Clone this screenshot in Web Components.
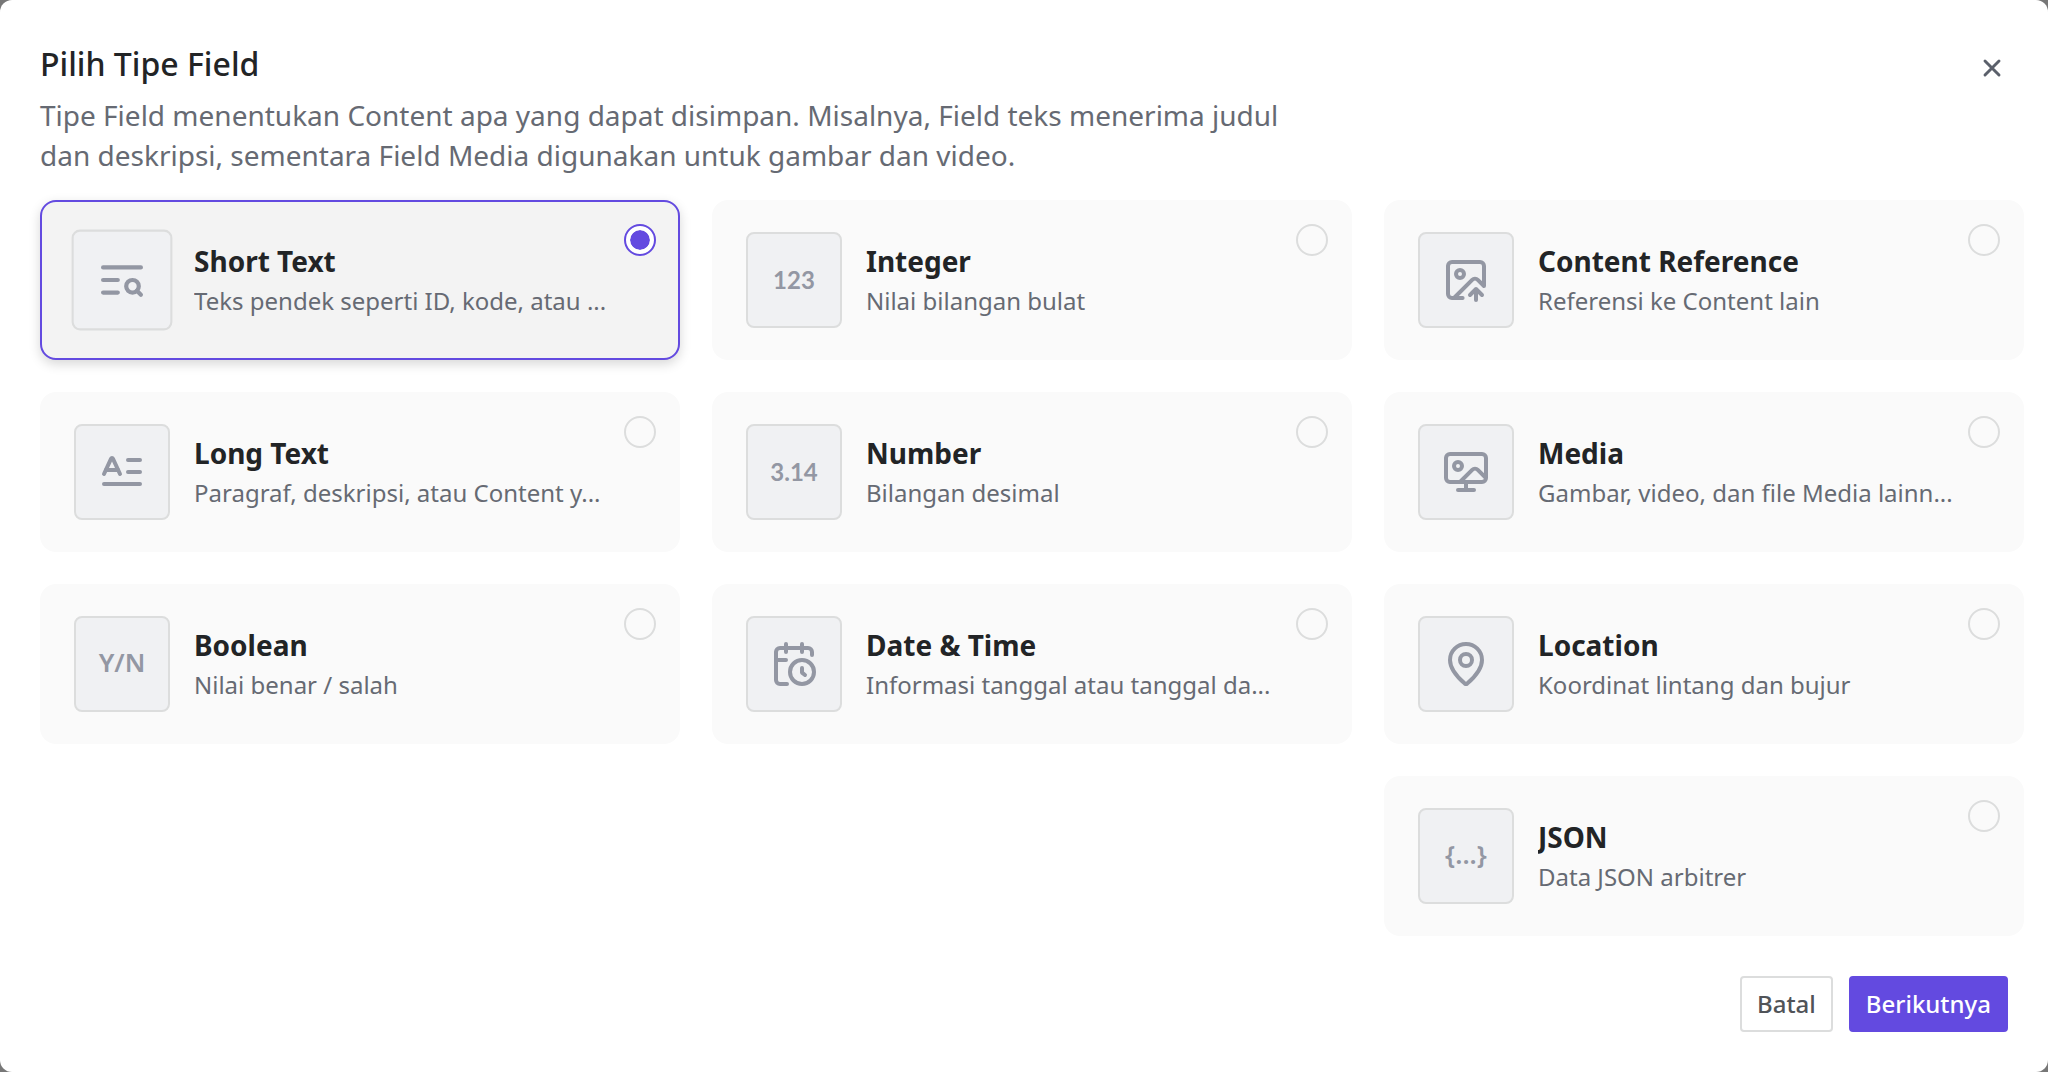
<!DOCTYPE html>
<html lang="id">
<head>
<meta charset="utf-8">
<meta name="viewport" content="width=device-width, initial-scale=1">
<title>Pilih Tipe Field</title>
<style>
    body {
        margin: 0;
        min-height: 100vh;
        background-color: #777;
        color: #222426;
        font-family: "Noto Sans", "Open Sans", sans-serif;
        --accent: #634ae0;
        --muted: #666a73;
        --line: #dcdddd;
        --icon: #9397a3;
    }
</style>
</head>
<body>
<field-dialog>
    <span slot="title">Pilih Tipe Field</span>
    <span slot="description">Tipe Field menentukan Content apa yang dapat disimpan. Misalnya, Field teks menerima judul dan deskripsi, sementara Field Media digunakan untuk gambar dan video.</span>

    <field-group>
        <field-column>
            <field-card icon="short-text" value="short-text" checked>
                <span slot="name">Short Text</span>
                <span slot="hint">Teks pendek seperti ID, kode, atau ...</span>
            </field-card>
            <field-card icon="long-text" value="long-text">
                <span slot="name">Long Text</span>
                <span slot="hint">Paragraf, deskripsi, atau Content y...</span>
            </field-card>
            <field-card symbol-size="large" value="boolean">
                <span slot="symbol">Y/N</span>
                <span slot="name">Boolean</span>
                <span slot="hint">Nilai benar / salah</span>
            </field-card>
        </field-column>
        <field-column>
            <field-card value="integer">
                <span slot="symbol">123</span>
                <span slot="name">Integer</span>
                <span slot="hint">Nilai bilangan bulat</span>
            </field-card>
            <field-card value="number">
                <span slot="symbol">3.14</span>
                <span slot="name">Number</span>
                <span slot="hint">Bilangan desimal</span>
            </field-card>
            <field-card icon="date" value="date">
                <span slot="name">Date &amp; Time</span>
                <span slot="hint">Informasi tanggal atau tanggal da...</span>
            </field-card>
        </field-column>
        <field-column>
            <field-card icon="reference" value="reference">
                <span slot="name">Content Reference</span>
                <span slot="hint">Referensi ke Content lain</span>
            </field-card>
            <field-card icon="media" value="media">
                <span slot="name">Media</span>
                <span slot="hint">Gambar, video, dan file Media lainn...</span>
            </field-card>
            <field-card icon="location" value="location">
                <span slot="name">Location</span>
                <span slot="hint">Koordinat lintang dan bujur</span>
            </field-card>
            <field-card symbol-size="large" value="json">
                <span slot="symbol">{...}</span>
                <span slot="name">JSON</span>
                <span slot="hint">Data JSON arbitrer</span>
            </field-card>
        </field-column>
    </field-group>

    <field-button slot="actions">Batal</field-button>
    <field-button slot="actions" variant="primary">Berikutnya</field-button>
</field-dialog>

<script>
    const ICONS = {
        'short-text': '<path d="M21 6H3M10 12H3M10 18H3"/><circle cx="17" cy="15" r="3"/><path d="m21 19-1.9-1.9"/>',
        'long-text': '<path d="M15 12h6M15 6h6"/><path d="m3 13 3.553-7.724a.5.5 0 0 1 .894 0L11 13"/><path d="M3 18h18M4 11h6"/>',
        'date': '<path d="M21 7.5V6a2 2 0 0 0-2-2H5a2 2 0 0 0-2 2v14a2 2 0 0 0 2 2h3.5"/><path d="M16 2v4M8 2v4M3 10h5"/><path d="M17.5 17.5 16 16.3V14"/><circle cx="16" cy="16" r="6"/>',
        'reference': '<path d="M10.3 21H5a2 2 0 0 1-2-2V5a2 2 0 0 1 2-2h14a2 2 0 0 1 2 2v10l-3.1-3.1a2 2 0 0 0-2.814.014L6 21"/><path d="m14 19.5 3-3 3 3M17 22v-5.5"/><circle cx="9" cy="9" r="2"/>',
        'media': '<circle cx="8" cy="9" r="2"/><path d="m9 17 6.1-6.1a2 2 0 0 1 2.81.01L22 15V5a2 2 0 0 0-2-2H4a2 2 0 0 0-2 2v10a2 2 0 0 0 2 2h16a2 2 0 0 0 2-2"/><path d="M8 21h8M12 17v4"/>',
        'location': '<path d="M20 10c0 4.993-5.539 10.193-7.399 11.799a1 1 0 0 1-1.202 0C9.539 20.193 4 14.993 4 10a8 8 0 0 1 16 0"/><circle cx="12" cy="10" r="3"/>'
    };

    /**
     * The modal panel: heading, close button, body and a row of actions.
     */
    class FieldDialog extends HTMLElement {
        constructor() {
            super();
            this.attachShadow({ mode: 'open' });
            this.shadowRoot.innerHTML = `
                <style>${this.styles}</style>
                <section class="dialog" role="dialog" aria-labelledby="title">
                    <header class="dialog__header">
                        <div class="dialog__heading">
                            <h1 class="dialog__title" id="title"><slot name="title"></slot></h1>
                            <p class="dialog__description"><slot name="description"></slot></p>
                        </div>
                        <button class="dialog__close" type="button" aria-label="Tutup">
                            <svg viewBox="0 0 24 24" aria-hidden="true"><path d="M18 6 6 18M6 6l12 12"/></svg>
                        </button>
                    </header>
                    <div class="dialog__body"><slot></slot></div>
                    <footer class="dialog__footer"><slot name="actions"></slot></footer>
                </section>
            `;
        }

        get styles() {
            return `
                :host {
                    display: block;
                }

                .dialog {
                    box-sizing: border-box;
                    min-height: 100vh;
                    padding: 40px 0;
                    border-radius: 12px;
                    background-color: #fff;
                    display: flex;
                    flex-direction: column;
                }

                .dialog__header {
                    display: flex;
                    justify-content: space-between;
                    align-items: flex-start;
                    padding: 0 40px;
                }

                .dialog__heading {
                    max-width: 1280px;
                }

                .dialog__title {
                    margin: 0 0 7px;
                    font-size: 32px;
                    font-weight: 500;
                    line-height: 48px;
                }

                .dialog__description {
                    margin: 0;
                    color: var(--muted);
                    font-size: 28px;
                    line-height: 40px;
                }

                .dialog__close {
                    display: flex;
                    align-items: center;
                    justify-content: center;
                    width: 32px;
                    height: 56px;
                    padding: 0;
                    border: none;
                    background: none;
                    color: #5b606b;
                    cursor: pointer;
                }

                .dialog__close svg {
                    width: 28px;
                    height: 28px;
                    flex: none;
                    fill: none;
                    stroke: currentColor;
                    stroke-width: 2.5;
                    stroke-linecap: round;
                }

                .dialog__body {
                    padding: 25px 24px 40px 40px;
                }

                .dialog__footer {
                    display: flex;
                    justify-content: flex-end;
                    gap: 16px;
                    margin-top: auto;
                    padding: 0 40px;
                }
            `;
        }
    }

    /**
     * Lays out the columns and keeps one card selected at a time.
     */
    class FieldGroup extends HTMLElement {
        constructor() {
            super();
            this.attachShadow({ mode: 'open' });
            this.shadowRoot.innerHTML = `<style>${this.styles}</style><slot></slot>`;
        }

        connectedCallback() {
            this.setAttribute('role', 'radiogroup');
            this.addEventListener('field-select', (event) => {
                this.querySelectorAll('field-card').forEach((card) => {
                    card.toggleAttribute('checked', card === event.target);
                });
            });
        }

        get styles() {
            return `
                :host {
                    display: grid;
                    grid-template-columns: repeat(3, minmax(0, 1fr));
                    align-items: start;
                    gap: 32px;
                }
            `;
        }
    }

    class FieldColumn extends HTMLElement {
        constructor() {
            super();
            this.attachShadow({ mode: 'open' });
            this.shadowRoot.innerHTML = `
                <style>
                    :host {
                        display: flex;
                        flex-direction: column;
                        gap: 32px;
                    }
                </style>
                <slot></slot>
            `;
        }
    }

    /**
     * A selectable field type with an icon or a short symbol.
     */
    class FieldCard extends HTMLElement {
        constructor() {
            super();
            this.attachShadow({ mode: 'open' });
            this.shadowRoot.innerHTML = `
                <style>${this.styles}</style>
                <label class="card">
                    <span class="card__icon"><slot name="symbol"></slot></span>
                    <span class="card__text">
                        <span class="card__name"><slot name="name"></slot></span>
                        <span class="card__hint"><slot name="hint"></slot></span>
                    </span>
                    <input class="card__radio" type="radio">
                </label>
            `;
            this.radio = this.shadowRoot.querySelector('.card__radio');
        }

        static get observedAttributes() {
            return ['checked'];
        }

        connectedCallback() {
            const icon = ICONS[this.getAttribute('icon')];
            if (icon) {
                this.shadowRoot.querySelector('.card__icon').innerHTML =
                    `<svg viewBox="0 0 24 24" aria-hidden="true">${icon}</svg>`;
            }
            this.radio.value = this.getAttribute('value');
            this.radio.addEventListener('change', () => {
                this.dispatchEvent(new CustomEvent('field-select', { bubbles: true }));
            });
        }

        attributeChangedCallback() {
            this.radio.checked = this.hasAttribute('checked');
        }

        get styles() {
            return `
                :host {
                    display: block;
                }

                .card {
                    box-sizing: border-box;
                    display: flex;
                    align-items: center;
                    gap: 24px;
                    min-height: 160px;
                    padding: 22px 22px 22px 32px;
                    border: 2px solid transparent;
                    border-radius: 16px;
                    background-color: #fafafa;
                    cursor: pointer;
                }

                .card__icon {
                    box-sizing: border-box;
                    flex: none;
                    display: flex;
                    align-items: center;
                    justify-content: center;
                    width: 96px;
                    height: 96px;
                    border: 2px solid var(--line);
                    border-radius: 8px;
                    background-color: #f0f1f3;
                    color: var(--icon);
                    font-family: Lato, "Noto Sans", sans-serif;
                    font-size: 24px;
                    font-weight: 700;
                    line-height: 32px;
                }

                :host([symbol-size="large"]) .card__icon {
                    padding-bottom: 4px;
                    font-family: "Noto Sans", sans-serif;
                    font-size: 26px;
                    font-weight: 600;
                }

                .card__icon svg {
                    width: 48px;
                    height: 48px;
                    fill: none;
                    stroke: currentColor;
                    stroke-width: 2;
                    stroke-linecap: round;
                    stroke-linejoin: round;
                }

                .card__text {
                    flex: 1;
                    min-width: 0;
                    display: flex;
                    flex-direction: column;
                    padding-top: 2px;
                }

                .card__name,
                .card__hint {
                    overflow: hidden;
                    text-overflow: ellipsis;
                    white-space: nowrap;
                    line-height: 40px;
                }

                .card__name {
                    font-size: 28px;
                    font-weight: 700;
                }

                .card__hint {
                    color: var(--muted);
                    font-size: 24px;
                }

                .card__radio {
                    appearance: none;
                    box-sizing: border-box;
                    flex: none;
                    align-self: flex-start;
                    width: 32px;
                    height: 32px;
                    margin: 0 0 0 -16px;
                    border: 2px solid var(--line);
                    border-radius: 50%;
                    cursor: pointer;
                }

                .card__radio:checked {
                    padding: 4px;
                    border-color: var(--accent);
                    background: var(--accent) content-box;
                    box-shadow: inset 0 0 0 4px #fff;
                }

                :host([checked]) .card {
                    border-color: var(--accent);
                    background-color: #f3f3f3;
                    box-shadow: 0 4px 12px rgba(0, 0, 0, 0.16);
                }

                :host([checked]) .card__icon {
                    transform: scale(1.05);
                }
            `;
        }
    }

    class FieldButton extends HTMLElement {
        constructor() {
            super();
            this.attachShadow({ mode: 'open' });
            this.shadowRoot.innerHTML = `<style>${this.styles}</style><button type="button"><slot></slot></button>`;
        }

        get styles() {
            return `
                :host {
                    display: block;
                }

                button {
                    box-sizing: border-box;
                    height: 56px;
                    padding: 0 15px;
                    border: 2px solid var(--line);
                    border-radius: 4px;
                    background-color: #fff;
                    color: #505358;
                    font-family: inherit;
                    font-size: 24px;
                    font-weight: 500;
                    line-height: 32px;
                    cursor: pointer;
                }

                :host([variant="primary"]) button {
                    border-color: var(--accent);
                    background-color: var(--accent);
                    color: #fff;
                }
            `;
        }
    }

    customElements.define('field-dialog', FieldDialog);
    customElements.define('field-group', FieldGroup);
    customElements.define('field-column', FieldColumn);
    customElements.define('field-card', FieldCard);
    customElements.define('field-button', FieldButton);
</script>
</body>
</html>
